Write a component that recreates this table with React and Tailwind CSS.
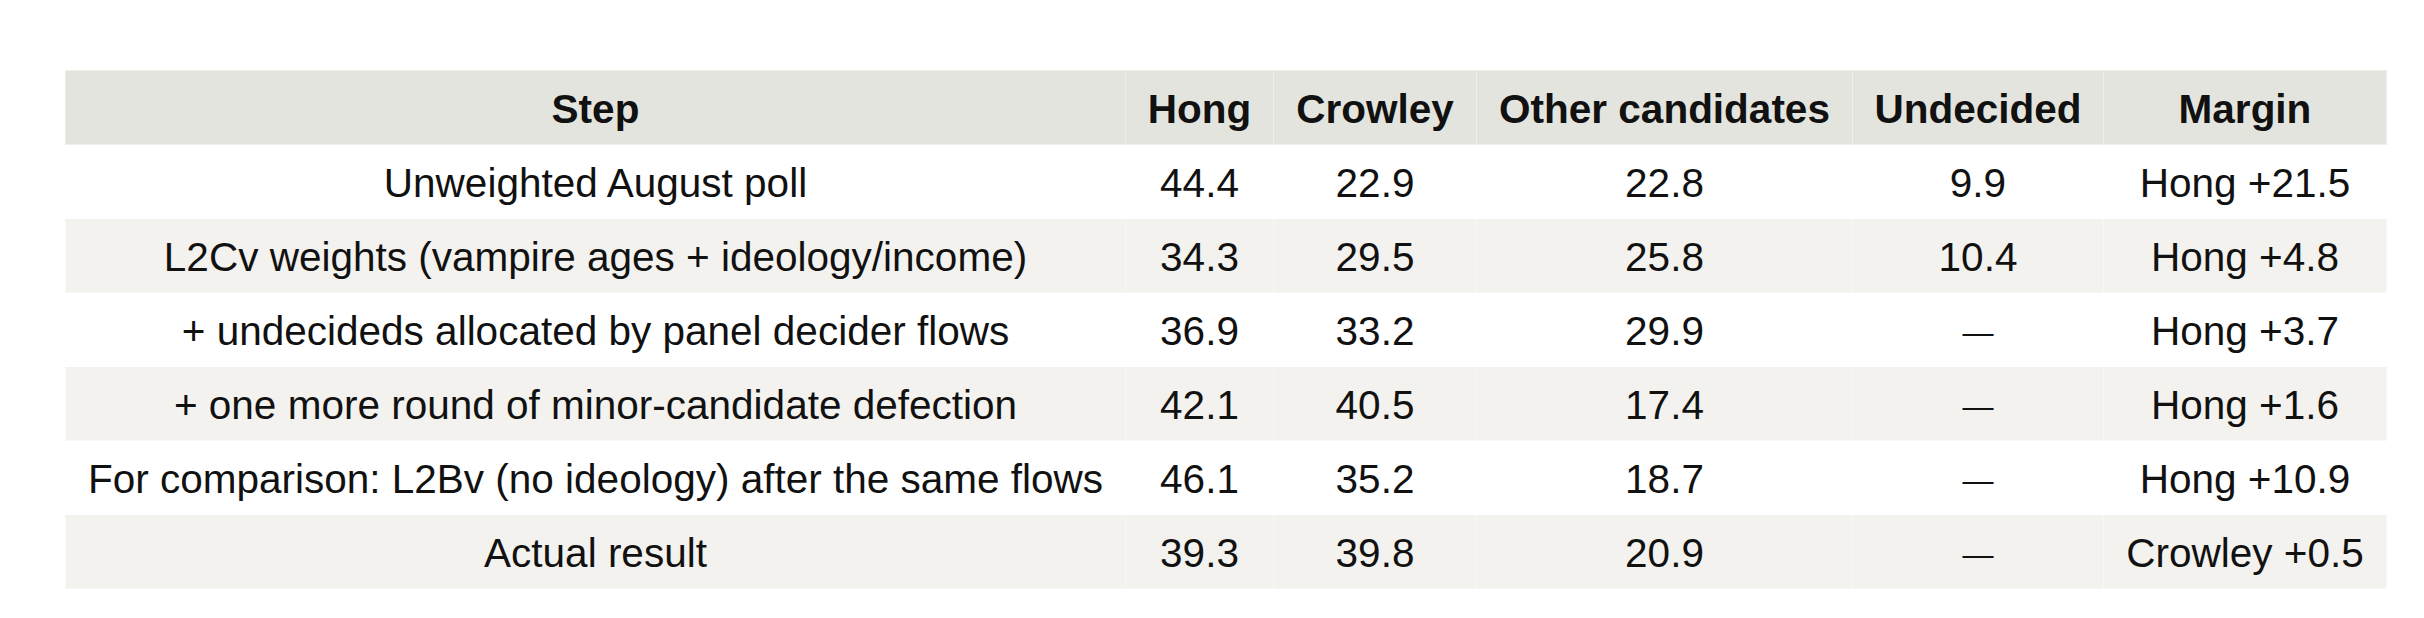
const rows = [
  ["Unweighted August poll", "44.4", "22.9", "22.8", "9.9", "Hong +21.5"],
  ["L2Cv weights (vampire ages + ideology/income)", "34.3", "29.5", "25.8", "10.4", "Hong +4.8"],
  ["+ undecideds allocated by panel decider flows", "36.9", "33.2", "29.9", "—", "Hong +3.7"],
  ["+ one more round of minor-candidate defection", "42.1", "40.5", "17.4", "—", "Hong +1.6"],
  ["For comparison: L2Bv (no ideology) after the same flows", "46.1", "35.2", "18.7", "—", "Hong +10.9"],
  ["Actual result", "39.3", "39.8", "20.9", "—", "Crowley +0.5"],
];

const headers = ["Step", "Hong", "Crowley", "Other candidates", "Undecided", "Margin"];

export default function App() {
  return (
    <div className="bg-white w-[2424px] h-[618px] pt-[70px] pl-[65px] text-[#111] font-['Liberation_Sans',Arial,sans-serif]">
      <table className="table-fixed border-collapse w-[2321px] text-[40.5px] leading-[46px]">
        <colgroup>
          <col className="w-[1060px]" />
          <col className="w-[148px]" />
          <col className="w-[203px]" />
          <col className="w-[376px]" />
          <col className="w-[251px]" />
          <col className="w-[283px]" />
        </colgroup>
        <thead>
          <tr className="h-[74px] bg-[#e4e4de]">
            {headers.map((h) => (
              <th key={h} className="border border-[#efefea] px-[20px] pt-[3px] text-center font-bold">
                {h}
              </th>
            ))}
          </tr>
        </thead>
        <tbody>
          {rows.map((r, i) => (
            <tr key={i} className={i % 2 === 1 ? "h-[74px] bg-[#f3f2ee]" : "h-[74px] bg-white"}>
              {r.map((c, j) => (
                <td
                  key={j}
                  className={
                    i % 2 === 1
                      ? "border border-[#f8f8f5] px-[20px] pt-[2px] text-center whitespace-nowrap"
                      : "border border-white px-[20px] pt-[2px] text-center whitespace-nowrap"
                  }
                >
                  {c === "—" ? <span className="text-[31px]">—</span> : c}
                </td>
              ))}
            </tr>
          ))}
        </tbody>
      </table>
    </div>
  );
}
